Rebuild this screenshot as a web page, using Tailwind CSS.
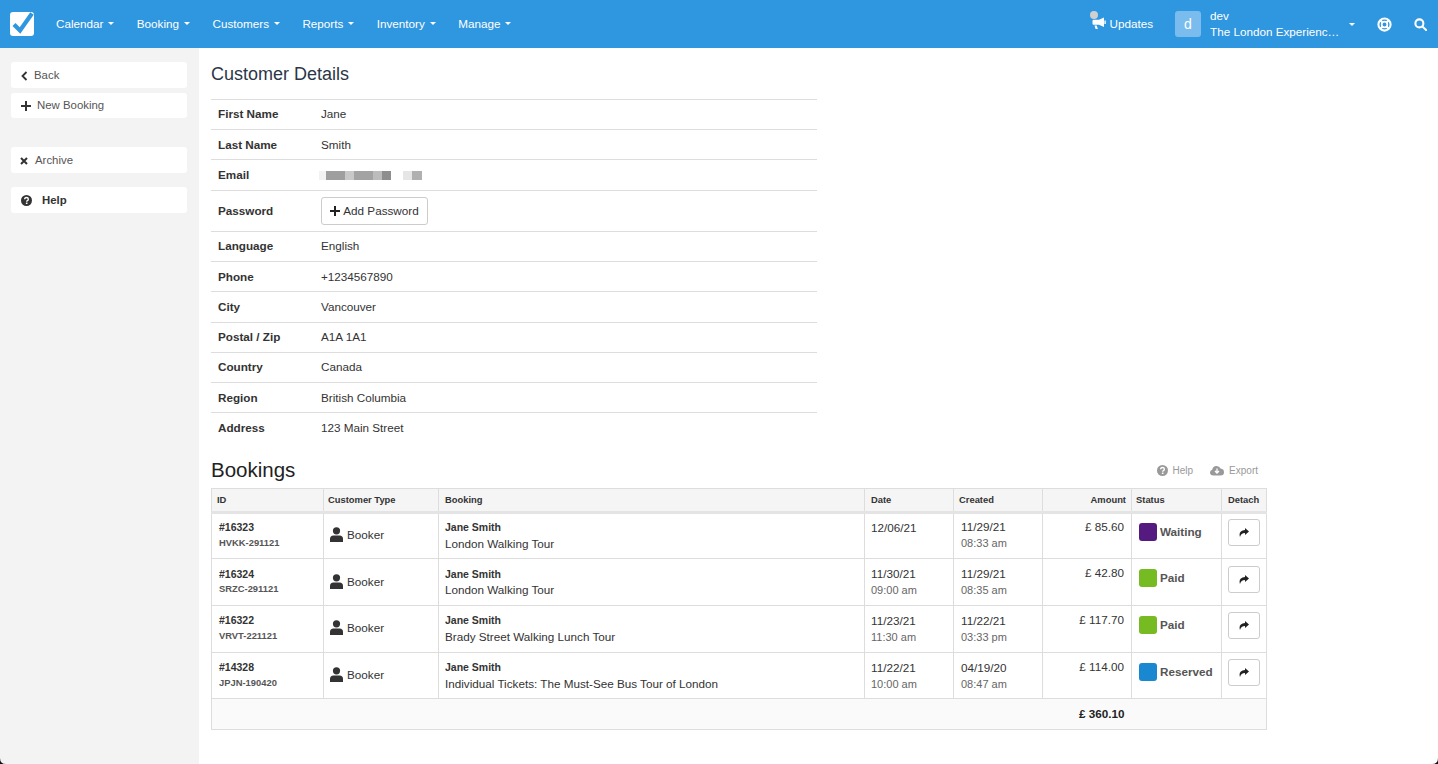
<!DOCTYPE html>
<html lang="en">
  <head>
    <meta charset="UTF-8" />
    <meta name="viewport" content="width=device-width, initial-scale=1.0" />
    <title>Customer Details</title>
    <script src="https://cdn.jsdelivr.net/npm/@tailwindcss/browser@4"></script>
  </head>
  <body class="relative h-[764px] w-[1438px] overflow-hidden bg-white font-['Liberation_Sans',Arial,sans-serif] text-[11.7px] text-[#333]">
    <!-- Top nav -->
    <header class="flex h-12 items-center bg-[#2f96e0] text-white">
      <div class="ml-[10px] flex h-6 w-6 items-center justify-center rounded-[3px] bg-white">
        <svg class="h-6 w-6" viewBox="0 0 24 24"><path d="M4 12.5l6 6L22 1.5" fill="none" stroke="#2f96e0" stroke-width="4.2"/></svg>
      </div>
      <nav class="ml-[22px] flex gap-[22.4px] text-[11.7px]">
        <a class="flex items-center gap-[5px]">Calendar <span class="h-0 w-0 border-x-[3px] border-t-[3px] border-x-transparent border-t-white"></span></a>
        <a class="flex items-center gap-[5px]">Booking <span class="h-0 w-0 border-x-[3px] border-t-[3px] border-x-transparent border-t-white"></span></a>
        <a class="flex items-center gap-[5px]">Customers <span class="h-0 w-0 border-x-[3px] border-t-[3px] border-x-transparent border-t-white"></span></a>
        <a class="flex items-center gap-[5px]">Reports <span class="h-0 w-0 border-x-[3px] border-t-[3px] border-x-transparent border-t-white"></span></a>
        <a class="flex items-center gap-[5px]">Inventory <span class="h-0 w-0 border-x-[3px] border-t-[3px] border-x-transparent border-t-white"></span></a>
        <a class="flex items-center gap-[5px]">Manage <span class="h-0 w-0 border-x-[3px] border-t-[3px] border-x-transparent border-t-white"></span></a>
      </nav>
      <div class="ml-auto flex items-center">
        <div class="relative flex items-center gap-[3px]">
          <span class="absolute -top-[4px] -left-[2px] h-2 w-2 rounded-full bg-[#d0d0d0]"></span>
          <svg class="h-[13px] w-[14px]" viewBox="0 0 14 13" fill="white"><path d="M12 0.5v9.5L7 7.8H1.5Q0.5 7.8 0.5 6.5V4Q0.5 2.7 1.5 2.7H7zM2.5 8.5h2.2l1.2 3.5H3.6z"/><rect x="12.4" y="3.5" width="1.4" height="3.5"/></svg>
          <span>Updates</span>
        </div>
        <div class="ml-[22px] flex h-[26px] w-[26px] items-center justify-center rounded-[3px] bg-[#7abcee] text-[14px]">d</div>
        <div class="ml-[9px] w-[134px] leading-[16px]">
          <div>dev</div>
          <div class="whitespace-nowrap">The London Experienc…</div>
        </div>
        <span class="ml-[5px] h-0 w-0 border-x-[3px] border-t-[3px] border-x-transparent border-t-white"></span>
        <svg class="ml-[22px] h-[15px] w-[15px]" viewBox="0 0 16 16" fill="none" stroke="white"><circle cx="8" cy="8" r="6.5" stroke-width="2.2"/><circle cx="8" cy="8" r="3" stroke-width="1.8"/><path d="M3.5 3.5l2.4 2.4M12.5 3.5l-2.4 2.4M3.5 12.5l2.4-2.4M12.5 12.5l-2.4-2.4" stroke-width="2.4"/></svg>
        <svg class="mr-[11px] ml-[22px] h-[13px] w-[13px]" viewBox="0 0 14 14" fill="none" stroke="white" stroke-width="2.2"><circle cx="5.8" cy="5.8" r="4.3"/><path d="M9 9l4 4" stroke-linecap="round"/></svg>
      </div>
    </header>

    <div class="flex h-[716px]">
      <!-- Sidebar -->
      <aside class="w-[199px] shrink-0 bg-[#f3f3f3] pt-[14px] pr-[12px] pl-[11px] text-[11.4px] text-[#555]">
        <a class="flex h-[26px] items-center rounded-[3px] bg-white pt-px pl-[10px]">
          <svg class="h-[10px] w-[7px]" viewBox="0 0 7 10" fill="none" stroke="#333" stroke-width="1.8"><path d="M5.5 1L1.5 5l4 4"/></svg>
          <span class="ml-[6px]">Back</span>
        </a>
        <a class="mt-[5px] flex h-[25px] items-center rounded-[3px] bg-white pt-px pl-[10px]">
          <svg class="h-[10px] w-[10px]" viewBox="0 0 10 10" fill="#333"><path d="M4 0h2v4h4v2H6v4H4V6H0V4h4z"/></svg>
          <span class="ml-[6px]">New Booking</span>
        </a>
        <a class="mt-[29px] flex h-[26px] items-center rounded-[3px] bg-white pt-px pl-[9px]">
          <svg class="h-[8px] w-[8px]" viewBox="0 0 8 8" fill="none" stroke="#333" stroke-width="2"><path d="M1 1l6 6M7 1L1 7"/></svg>
          <span class="ml-[7px]">Archive</span>
        </a>
        <a class="mt-[14px] flex h-[26px] items-center rounded-[3px] bg-white pt-px pl-[10px] font-bold text-[#333]">
          <svg class="h-[11px] w-[11px]" viewBox="0 0 24 24"><circle cx="12" cy="12" r="12" fill="#333"/><path d="M8 9.5Q8 5.5 12 5.5T16 9Q16 11 13.8 12.2 12.5 13 12.5 14.5" fill="none" stroke="white" stroke-width="3"/><rect x="10.7" y="16.5" width="3.4" height="3.2" fill="white"/></svg>
          <span class="ml-[10px]">Help</span>
        </a>
      </aside>

      <!-- Main -->
      <main class="flex-1 pl-3">
        <h1 class="mt-[16px] h-[35px] text-[18px] leading-5 text-[#2b3648]">Customer Details</h1>

        <table class="w-[606px] table-fixed border-collapse border-t border-[#ddd]">
          <colgroup><col class="w-[104px]" /><col /></colgroup>
          <tbody>
            <tr class="h-[30px] border-b border-[#ddd]"><th class="pb-[2px] pl-[7px] text-left font-bold">First Name</th><td class="pb-[2px] pl-[6px]">Jane</td></tr>
            <tr class="h-[30px] border-b border-[#ddd]"><th class="pl-[7px] text-left font-bold">Last Name</th><td class="pl-[6px]">Smith</td></tr>
            <tr class="h-[31px] border-b border-[#ddd]"><th class="pl-[7px] text-left font-bold">Email</th>
              <td class="pl-[4px]">
                <div class="flex h-[9px] w-[105px]">
                  <span class="w-[7px] bg-[#f2f2f2]"></span><span class="w-[19px] bg-[#9e9e9e]"></span><span class="w-[9px] bg-[#c8c8c8]"></span><span class="w-[19px] bg-[#a3a3a3]"></span><span class="w-[9px] bg-[#bcbcbc]"></span><span class="w-[9px] bg-[#8e8e8e]"></span><span class="w-[12px]"></span><span class="w-[9px] bg-[#e6e6e6]"></span><span class="w-[10px] bg-[#b0b0b0]"></span>
                </div>
              </td></tr>
            <tr class="h-[41px] border-b border-[#ddd]"><th class="pl-[7px] text-left font-bold">Password</th>
              <td class="pl-[6px]">
                <button class="flex h-7 w-[107px] items-center justify-center gap-[3px] rounded-[3px] border border-[#ccc] bg-white text-[#333]">
                  <svg class="h-[10px] w-[10px]" viewBox="0 0 10 10" fill="#222"><path d="M4 0h2v4h4v2H6v4H4V6H0V4h4z"/></svg>Add Password
                </button>
              </td></tr>
            <tr class="h-[30px] border-b border-[#ddd]"><th class="pb-[2px] pl-[7px] text-left font-bold">Language</th><td class="pb-[2px] pl-[6px]">English</td></tr>
            <tr class="h-[30px] border-b border-[#ddd]"><th class="pl-[7px] text-left font-bold">Phone</th><td class="pl-[6px]">+1234567890</td></tr>
            <tr class="h-[31px] border-b border-[#ddd]"><th class="pl-[7px] text-left font-bold">City</th><td class="pl-[6px]">Vancouver</td></tr>
            <tr class="h-[30px] border-b border-[#ddd]"><th class="pb-[2px] pl-[7px] text-left font-bold">Postal / Zip</th><td class="pb-[2px] pl-[6px]">A1A 1A1</td></tr>
            <tr class="h-[30px] border-b border-[#ddd]"><th class="pb-[2px] pl-[7px] text-left font-bold">Country</th><td class="pb-[2px] pl-[6px]">Canada</td></tr>
            <tr class="h-[30px] border-b border-[#ddd]"><th class="pl-[7px] text-left font-bold">Region</th><td class="pl-[6px]">British Columbia</td></tr>
            <tr class="h-[30px]"><th class="pl-[7px] text-left font-bold">Address</th><td class="pl-[6px]">123 Main Street</td></tr>
          </tbody>
        </table>

        <!-- Bookings -->
        <div class="mt-[10px] flex h-[35px] w-[1056px] items-center justify-between">
          <h2 class="text-[20.5px] text-[#222]">Bookings</h2>
          <div class="mr-[9px] flex items-center gap-[17px] pt-px text-[10px] text-[#999]">
            <span class="flex items-center gap-[5px]">
              <svg class="h-[11px] w-[11px]" viewBox="0 0 24 24"><circle cx="12" cy="12" r="12" fill="#999"/><path d="M8 9.5Q8 5.5 12 5.5T16 9Q16 11 13.8 12.2 12.5 13 12.5 14.5" fill="none" stroke="white" stroke-width="3"/><rect x="10.7" y="16.5" width="3.4" height="3.2" fill="white"/></svg>Help
            </span>
            <span class="flex items-center gap-[5px]">
              <svg class="h-[11px] w-[14px]" viewBox="0 0 14 11"><path d="M3.5 10.5Q0 10.5 0 7.5 0 5.2 2.2 4.8 2.8 1 6.5 1 9.5 1 10.5 3.6 14 4 14 7.2 14 10.5 10.5 10.5z" fill="#999"/><path d="M7 3.5v4M5 6l2 2 2-2" fill="none" stroke="white" stroke-width="1.3"/></svg>Export
            </span>
          </div>
        </div>

        <table class="w-[1056px] table-fixed border-collapse border border-[#ddd] text-[#333]">
          <colgroup>
            <col class="w-[112px]" /><col class="w-[115px]" /><col class="w-[426px]" /><col class="w-[89px]" /><col class="w-[89px]" /><col class="w-[89px]" /><col class="w-[90px]" /><col />
          </colgroup>
          <thead>
            <tr class="h-[24px] border-b-[3px] border-[#e4e4e4] bg-[#f5f5f5] text-[9.4px]">
              <th class="border-r border-[#ddd] pt-[2px] pl-[5px] text-left font-bold">ID</th>
              <th class="border-r border-[#ddd] pt-[2px] pl-[4px] text-left font-bold">Customer Type</th>
              <th class="border-r border-[#ddd] pt-[2px] pl-[6px] text-left font-bold">Booking</th>
              <th class="border-r border-[#ddd] pt-[2px] pl-[6px] text-left font-bold">Date</th>
              <th class="border-r border-[#ddd] pt-[2px] pl-[5px] text-left font-bold">Created</th>
              <th class="border-r border-[#ddd] pt-[2px] pr-[5px] text-right font-bold">Amount</th>
              <th class="border-r border-[#ddd] pt-[2px] pl-[4px] text-left font-bold">Status</th>
              <th class="pt-[2px] pl-[6px] text-left font-bold">Detach</th>
            </tr>
          </thead>
          <tbody>
            <tr class="h-[46px] border-b border-[#ddd]">
              <td class="border-r border-[#ddd] pb-[2px] pl-[7px]"><div class="text-[10.5px] leading-4 font-bold">#16323</div><div class="text-[9.4px] leading-[15px] font-bold text-[#555]">HVKK-291121</div></td>
              <td class="border-r border-[#ddd] pb-[2px] pl-[6px]"><div class="flex items-center gap-[4px]"><svg class="h-[15px] w-[13px]" viewBox="0 0 13 15" fill="#333"><circle cx="6.5" cy="3.8" r="3.6"/><path d="M0 15v-3Q0 8.5 3.5 8.5h6Q13 8.5 13 12v3z"/></svg>Booker</div></td>
              <td class="border-r border-[#ddd] pl-[6px]"><div class="text-[10.5px] leading-4 font-bold">Jane Smith</div><div class="leading-[18px]">London Walking Tour</div></td>
              <td class="border-r border-[#ddd] pt-[6px] pl-[6px] align-top"><div class="leading-4">12/06/21</div></td>
              <td class="border-r border-[#ddd] pl-[7px]"><div class="leading-4">11/29/21</div><div class="text-[11px] leading-[17px] text-[#666]">08:33 am</div></td>
              <td class="border-r border-[#ddd] pt-[5px] pr-[7px] text-right align-top"><div class="leading-4">£ 85.60</div></td>
              <td class="border-r border-[#ddd] pt-[9px] pl-[7px] align-top"><div class="flex items-center gap-[3px] font-bold text-[#555]"><span class="h-[18px] w-[18px] rounded-[3px] bg-[#541a80]"></span>Waiting</div></td>
              <td class="pt-[5px] pl-[6px] align-top"><button class="flex h-[27px] w-[32px] items-center justify-center rounded-[3px] border border-[#ccc]"><svg class="h-[9px] w-[10px]" viewBox="0 0 10 9" fill="#222"><path d="M6 0l4 3.5L6 7V5Q2 5 1 9q-2-6 5-7z"/></svg></button></td>
            </tr>
            <tr class="h-[47px] border-b border-[#ddd]">
              <td class="border-r border-[#ddd] pb-[1px] pl-[7px]"><div class="text-[10.5px] leading-4 font-bold">#16324</div><div class="text-[9.4px] leading-[14px] font-bold text-[#555]">SRZC-291121</div></td>
              <td class="border-r border-[#ddd] pl-[6px]"><div class="flex items-center gap-[4px]"><svg class="h-[15px] w-[13px]" viewBox="0 0 13 15" fill="#333"><circle cx="6.5" cy="3.8" r="3.6"/><path d="M0 15v-3Q0 8.5 3.5 8.5h6Q13 8.5 13 12v3z"/></svg>Booker</div></td>
              <td class="border-r border-[#ddd] pl-[6px]"><div class="text-[10.5px] leading-4 font-bold">Jane Smith</div><div class="leading-[16px]">London Walking Tour</div></td>
              <td class="border-r border-[#ddd] pl-[6px]"><div class="leading-4">11/30/21</div><div class="text-[11px] leading-[16px] text-[#666]">09:00 am</div></td>
              <td class="border-r border-[#ddd] pl-[7px]"><div class="leading-4">11/29/21</div><div class="text-[11px] leading-[16px] text-[#666]">08:35 am</div></td>
              <td class="border-r border-[#ddd] pt-[6px] pr-[7px] text-right align-top"><div class="leading-4">£ 42.80</div></td>
              <td class="border-r border-[#ddd] pt-[10px] pl-[7px] align-top"><div class="flex items-center gap-[3px] font-bold text-[#555]"><span class="h-[18px] w-[18px] rounded-[3px] bg-[#77bb22]"></span>Paid</div></td>
              <td class="pt-[7px] pl-[6px] align-top"><button class="flex h-[27px] w-[32px] items-center justify-center rounded-[3px] border border-[#ccc]"><svg class="h-[9px] w-[10px]" viewBox="0 0 10 9" fill="#222"><path d="M6 0l4 3.5L6 7V5Q2 5 1 9q-2-6 5-7z"/></svg></button></td>
            </tr>
            <tr class="h-[47px] border-b border-[#ddd]">
              <td class="border-r border-[#ddd] pb-[2px] pl-[7px]"><div class="text-[10.5px] leading-4 font-bold">#16322</div><div class="text-[9.4px] leading-[15px] font-bold text-[#555]">VRVT-221121</div></td>
              <td class="border-r border-[#ddd] pb-[2px] pl-[6px]"><div class="flex items-center gap-[4px]"><svg class="h-[15px] w-[13px]" viewBox="0 0 13 15" fill="#333"><circle cx="6.5" cy="3.8" r="3.6"/><path d="M0 15v-3Q0 8.5 3.5 8.5h6Q13 8.5 13 12v3z"/></svg>Booker</div></td>
              <td class="border-r border-[#ddd] pl-[6px]"><div class="text-[10.5px] leading-4 font-bold">Jane Smith</div><div class="leading-[18px]">Brady Street Walking Lunch Tour</div></td>
              <td class="border-r border-[#ddd] pl-[6px]"><div class="leading-4">11/23/21</div><div class="text-[11px] leading-[16px] text-[#666]">11:30 am</div></td>
              <td class="border-r border-[#ddd] pl-[7px]"><div class="leading-4">11/22/21</div><div class="text-[11px] leading-[16px] text-[#666]">03:33 pm</div></td>
              <td class="border-r border-[#ddd] pt-[6px] pr-[7px] text-right align-top"><div class="leading-4">£ 117.70</div></td>
              <td class="border-r border-[#ddd] pt-[10px] pl-[7px] align-top"><div class="flex items-center gap-[3px] font-bold text-[#555]"><span class="h-[18px] w-[18px] rounded-[3px] bg-[#77bb22]"></span>Paid</div></td>
              <td class="pt-[6px] pl-[6px] align-top"><button class="flex h-[27px] w-[32px] items-center justify-center rounded-[3px] border border-[#ccc]"><svg class="h-[9px] w-[10px]" viewBox="0 0 10 9" fill="#222"><path d="M6 0l4 3.5L6 7V5Q2 5 1 9q-2-6 5-7z"/></svg></button></td>
            </tr>
            <tr class="h-[46px] border-b border-[#ddd]">
              <td class="border-r border-[#ddd] pb-[2px] pl-[7px]"><div class="text-[10.5px] leading-4 font-bold">#14328</div><div class="text-[9.4px] leading-[15px] font-bold text-[#555]">JPJN-190420</div></td>
              <td class="border-r border-[#ddd] pl-[6px]"><div class="flex items-center gap-[4px]"><svg class="h-[15px] w-[13px]" viewBox="0 0 13 15" fill="#333"><circle cx="6.5" cy="3.8" r="3.6"/><path d="M0 15v-3Q0 8.5 3.5 8.5h6Q13 8.5 13 12v3z"/></svg>Booker</div></td>
              <td class="border-r border-[#ddd] pt-[2px] pl-[6px]"><div class="text-[10.5px] leading-4 font-bold">Jane Smith</div><div class="leading-[18px]">Individual Tickets: The Must-See Bus Tour of London</div></td>
              <td class="border-r border-[#ddd] pt-[2px] pl-[6px]"><div class="leading-4">11/22/21</div><div class="text-[11px] leading-[16px] text-[#666]">10:00 am</div></td>
              <td class="border-r border-[#ddd] pt-[2px] pl-[7px]"><div class="leading-4">04/19/20</div><div class="text-[11px] leading-[16px] text-[#666]">08:47 am</div></td>
              <td class="border-r border-[#ddd] pt-[6px] pr-[7px] text-right align-top"><div class="leading-4">£ 114.00</div></td>
              <td class="border-r border-[#ddd] pt-[10px] pl-[7px] align-top"><div class="flex items-center gap-[3px] font-bold text-[#555]"><span class="h-[18px] w-[18px] rounded-[3px] bg-[#1a88d0]"></span>Reserved</div></td>
              <td class="pt-[6px] pl-[6px] align-top"><button class="flex h-[27px] w-[32px] items-center justify-center rounded-[3px] border border-[#ccc]"><svg class="h-[9px] w-[10px]" viewBox="0 0 10 9" fill="#222"><path d="M6 0l4 3.5L6 7V5Q2 5 1 9q-2-6 5-7z"/></svg></button></td>
            </tr>
            <tr class="h-[31px] bg-[#fafafa]">
              <td colspan="6" class="pr-[7px] text-right font-bold text-[#222]">£ 360.10</td>
              <td colspan="2"></td>
            </tr>
          </tbody>
        </table>
      </main>
    </div>

    <!-- window corners -->
    <svg class="absolute bottom-0 left-0 h-[6px] w-[6px]" viewBox="0 0 6 6"><path d="M0 0Q0 6 6 6H0z" fill="#111"/></svg>
    <svg class="absolute right-0 bottom-0 h-[6px] w-[6px]" viewBox="0 0 6 6"><path d="M6 0Q6 6 0 6H6z" fill="#111"/></svg>
  </body>
</html>
